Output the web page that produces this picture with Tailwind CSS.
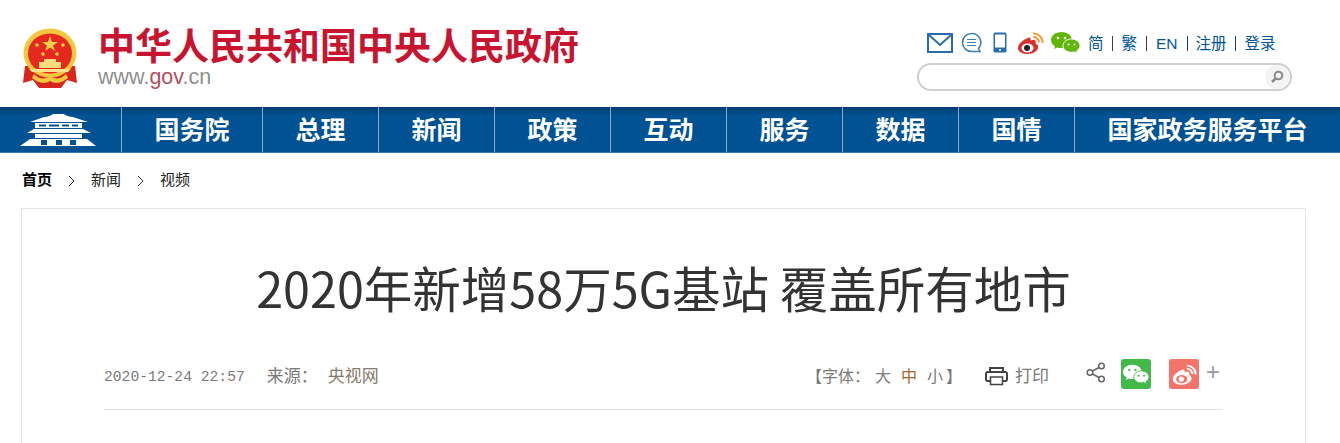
<!DOCTYPE html>
<html lang="zh-CN">
<head>
    <meta charset="UTF-8">
    <meta name="viewport" content="width=device-width, initial-scale=1.0">
    <title>2020年新增58万5G基站 覆盖所有地市</title>
    <script src="https://cdn.jsdelivr.net/npm/@tailwindcss/browser@4"></script>
</head>
<body class="bg-white overflow-hidden font-['Liberation_Sans','Noto_Sans_CJK_SC',sans-serif]">

    <!-- Header -->
    <header class="h-[107px] flex justify-between">
        <div class="flex pl-[22px] pt-[24px]">
            <svg class="w-[56px] h-[62px] mt-[4px]" viewBox="0 0 56 62">
                <path d="M3 38 L1 55 L11 52 L17 60 L39 60 L45 52 L55 55 L53 38 Z" fill="#d8261c"/>
                <ellipse cx="28" cy="25" rx="26.500" ry="24.500" fill="#f5c63f"/>
                <ellipse cx="28" cy="25.500" rx="22" ry="20" fill="#e5291f"/>
                <polygon points="28,8 30,14 36,14 31,17.500 33,23 28,19.500 23,23 25,17.500 20,14 26,14" fill="#f7d14a"/>
                <circle cx="15" cy="17" r="1.800" fill="#f7d14a"/>
                <circle cx="41" cy="17" r="1.800" fill="#f7d14a"/>
                <circle cx="21" cy="26" r="1.800" fill="#f7d14a"/>
                <circle cx="35" cy="26" r="1.800" fill="#f7d14a"/>
                <path d="M22 31 h12 v3 h5 v6 h-22 v-6 h5 Z" fill="#f9dd7c"/>
                <path d="M7 41 h42 l-3 3 h-36 Z" fill="#fbe389"/>
                <path d="M12 46 q8 8 16 2 q8 6 16 -2 l2 4 q-10 8 -18 3 q-8 5 -18 -3 Z" fill="#f5c63f"/>
            </svg>
            <div class="ml-[20px]">
                <div class="text-[37px] leading-[40px] font-bold text-[#c8142f] whitespace-nowrap font-['Noto_Sans_CJK_SC',sans-serif]">中华人民共和国中央人民政府</div>
                <div class="text-[21.500px] leading-[24px] mt-[1px] text-[#8f8f8f]">www.<span class="text-[#b4505f]">gov</span>.cn</div>
            </div>
        </div>

        <div class="w-[423px] pt-[30px]">
            <div class="flex items-center h-[25px] pl-[10px] text-[15.500px] text-[#00549a]">
                <svg class="w-[26px] h-[20px]" viewBox="0 0 26 20" fill="none" stroke="#2a6ca8" stroke-width="2">
                    <rect x="1" y="1" width="24" height="18"/>
                    <path d="M1.500 1.500 L13 12 L24.500 1.500"/>
                </svg>
                <svg class="w-[21px] h-[21px] ml-[8px]" viewBox="0 0 21 21" fill="none" stroke="#3d7fb5" stroke-width="1.500">
                    <path d="M10.500 1.500 a9 9 0 1 0 0 18 h8.500 l-1.500 -3 a9 9 0 0 0 -7 -15 Z"/>
                    <path d="M6 7.500 h9 M6 10.500 h9 M6 13.500 h9" stroke-width="1.200"/>
                </svg>
                <svg class="w-[14px] h-[21px] ml-[11px]" viewBox="0 0 14 21">
                    <rect x="0.500" y="0.500" width="13" height="20" rx="1.500" fill="#2a6ca8"/>
                    <rect x="2" y="2.500" width="10" height="13" fill="#fff"/>
                    <circle cx="7" cy="18" r="1" fill="#fff"/>
                </svg>
                <svg class="w-[27px] h-[22px] ml-[10px]" viewBox="0 0 27 22">
                    <path d="M11 6 C6 8 1 12 1 16 C1 20 6 22 11 22 C17 22 22 18 21 14 C20.500 12.500 19 12 18.500 11.500 C19.500 9 18.500 7.500 15.500 8 L13.500 8.500 C14 6 13 5 11 6 Z" fill="#dc2f2c"/>
                    <ellipse cx="10.500" cy="16" rx="6" ry="4.500" fill="#fff"/>
                    <circle cx="10" cy="16" r="3" fill="#222"/>
                    <path d="M16 1.500 A9 9 0 0 1 25.500 11" fill="none" stroke="#f29a38" stroke-width="2"/>
                    <path d="M16 5 A5.500 5.500 0 0 1 22 10.500" fill="none" stroke="#f29a38" stroke-width="2"/>
                </svg>
                <svg class="w-[29px] h-[22px] ml-[7px]" viewBox="0 0 29 22">
                    <path d="M10.500 0 C4.700 0 0 3.600 0 8 C0 10.600 1.500 12.800 4 14.300 L3 17 L6.300 15.400 C7.600 15.800 9 16 10.500 16 C16.300 16 21 12.400 21 8 C21 3.600 16.300 0 10.500 0 Z" fill="#5eb709"/>
                    <path d="M20.500 7 C15.800 7 12 10 12 13.700 C12 17.400 15.800 20.300 20.500 20.300 C21.500 20.300 22.500 20.200 23.400 19.900 L26.500 21.500 L25.700 18.800 C27.700 17.500 29 15.700 29 13.700 C29 10 25.200 7 20.500 7 Z" fill="#5eb709" stroke="#fff"/>
                    <circle cx="7" cy="6" r="1.300" fill="#fff"/><circle cx="14" cy="6" r="1.300" fill="#fff"/>
                    <circle cx="17.500" cy="12.500" r="1.100" fill="#fff"/><circle cx="23.500" cy="12.500" r="1.100" fill="#fff"/>
                </svg>
                <span class="ml-[8px] pt-[2px]">简</span>
                <span class="w-px h-[15px] bg-[#4a3a3a] ml-[8px] mt-[2px]"></span>
                <span class="ml-[9px] pt-[2px]">繁</span>
                <span class="w-px h-[15px] bg-[#4a3a3a] ml-[9px] mt-[2px]"></span>
                <span class="ml-[9px] pt-[2px]">EN</span>
                <span class="w-px h-[15px] bg-[#1b3d66] ml-[9px] mt-[2px]"></span>
                <span class="ml-[8px] pt-[2px]">注册</span>
                <span class="w-px h-[15px] bg-[#1b3d66] ml-[8px] mt-[2px]"></span>
                <span class="ml-[9px] pt-[2px]">登录</span>
            </div>
            <div class="mt-[8px] w-[375px] h-[28px] border-2 border-[#cfcfcf] rounded-full bg-white flex items-center justify-end pr-[1px]">
                <span class="w-[24px] h-[24px] rounded-full bg-[#f3f3f3] flex items-center justify-center">
                    <svg class="w-[14px] h-[14px]" viewBox="0 0 14 14" fill="none" stroke="#8a8a84" stroke-width="2">
                        <circle cx="8.500" cy="5.500" r="3.800"/>
                        <path d="M5.500 8.500 L2 12" stroke-width="2.500"/>
                    </svg>
                </span>
            </div>
        </div>
    </header>

    <!-- Nav -->
    <nav class="h-[46px] flex bg-gradient-to-b from-[#003d70] via-[#005293] via-[18%] to-[#005293] border-b border-[#3a78ab] text-white text-[25px] leading-[43px] font-bold font-['Noto_Sans_CJK_SC',sans-serif]">
        <div class="w-[122px] border-r border-[#8fa9c4] flex justify-center items-center pr-[6px]">
            <svg class="w-[76px] h-[32px]" viewBox="0 0 76 32" fill="#fff">
                <!-- upper roof -->
                <path d="M24 3 Q30 2.500 33 0 H44 Q47 2.500 53 3 L68 8 H10 Z"/>
                <!-- upper storey with windows -->
                <path d="M15 9 H62 V14 H15 Z"/>
                <path d="M19 10.500 H26 V12.500 H19 Z M29 10.500 H39 V12.500 H29 Z M42 10.500 H49 V12.500 H42 Z M52 10.500 H58 V12.500 H52 Z" fill="#005293"/>
                <!-- middle roof -->
                <path d="M14 15 H63 L71 19 H7 Z"/>
                <!-- lower storey and plinth -->
                <path d="M15 20 H62 V24 H15 Z"/>
                <path d="M10 25 H67 L76 32 H0 Z"/>
                <path d="M21 26 H27 V31 H21 Z M36 26 H42 V31 H36 Z M50 26 H56 V31 H50 Z" fill="#005293"/>
            </svg>
        </div>
        <a class="w-[141px] text-center border-r border-[#8fa9c4]">国务院</a>
        <a class="w-[116px] text-center border-r border-[#8fa9c4]">总理</a>
        <a class="w-[116px] text-center border-r border-[#8fa9c4]">新闻</a>
        <a class="w-[116px] text-center border-r border-[#8fa9c4]">政策</a>
        <a class="w-[116px] text-center border-r border-[#8fa9c4]">互动</a>
        <a class="w-[116px] text-center border-r border-[#8fa9c4]">服务</a>
        <a class="w-[116px] text-center border-r border-[#8fa9c4]">数据</a>
        <a class="w-[116px] text-center border-r border-[#8fa9c4]">国情</a>
        <a class="flex-1 text-center">国家政务服务平台</a>
    </nav>

    <!-- Breadcrumb -->
    <div class="h-[55px] pl-[22px] flex items-center text-[15px] text-[#222]">
        <span class="font-bold text-black">首页</span>
        <svg class="w-[7px] h-[12px] mx-[16px]" viewBox="0 0 7 12" fill="none" stroke="#333"><path d="M1 1 L6 6 L1 11"/></svg>
        <span>新闻</span>
        <svg class="w-[7px] h-[12px] mx-[16px]" viewBox="0 0 7 12" fill="none" stroke="#333"><path d="M1 1 L6 6 L1 11"/></svg>
        <span>视频</span>
    </div>

    <!-- Article -->
    <main class="mx-[21px] w-[1285px] border border-b-0 border-[#e5e5e5] px-[82px] h-[235px]">
        <h1 class="pt-[46px] h-[150px] text-center text-[48.500px] leading-[64px] font-normal text-[#333] font-['Noto_Sans_CJK_SC',sans-serif]">2020年新增58万5G基站 覆盖所有地市</h1>
        <div class="h-[51px] border-b border-[#dfdfdf] flex items-start justify-between text-[16px] leading-[36px] text-[#7a7a7a] [text-spacing-trim:space-all]">
            <div class="flex">
                <span class="font-['Liberation_Mono',monospace] text-[14.670px]">2020-12-24 22:57</span>
                <span class="ml-[22px] text-[17px]">来源：</span>
                <span class="ml-[10px] text-[17px] text-[#8a7a6a]">央视网</span>
            </div>
            <div class="flex items-start mr-[3px]">
                <span>【字体：</span>
                <span class="ml-[5px]">大</span>
                <span class="ml-[10px] text-[#a2692c]">中</span>
                <span class="ml-[10px]">小</span>
                <span class="ml-[3px]">】</span>
                <svg class="w-[23px] h-[20px] ml-[23px] mt-[7px]" viewBox="0 0 23 20" fill="none" stroke="#444" stroke-width="2">
                    <path d="M5 6 V2 H18 V6"/>
                    <path d="M5 15 H2.500 Q1 15 1 13 V8 Q1 6 3 6 H20 Q22 6 22 8 V13 Q22 15 20.500 15 H18"/>
                    <rect x="5.500" y="11" width="12" height="7.500" stroke-width="1.500"/>
                </svg>
                <span class="ml-[7px] text-[17px]">打印</span>
                <svg class="w-[20px] h-[21px] ml-[37px] mt-[3px]" viewBox="0 0 20 21" fill="none" stroke="#666" stroke-width="1.500">
                    <circle cx="15.500" cy="4" r="2.800"/><circle cx="4" cy="10.500" r="2.800"/><circle cx="15.500" cy="17" r="2.800"/>
                    <path d="M6.500 9 L13 5.500 M6.500 12 L13 15.500"/>
                </svg>
                <span class="w-[30px] h-[30px] rounded-[3px] bg-[#43b94a] ml-[15px] flex items-center justify-center">
                    <svg class="w-[26px] h-[21px]" viewBox="0 0 29 22">
                        <path d="M10.500 0 C4.700 0 0 3.600 0 8 C0 10.600 1.500 12.800 4 14.300 L3 17 L6.300 15.400 C7.600 15.800 9 16 10.500 16 C16.300 16 21 12.400 21 8 C21 3.600 16.300 0 10.500 0 Z" fill="#fff"/>
                        <path d="M20.500 7 C15.800 7 12 10 12 13.700 C12 17.400 15.800 20.300 20.500 20.300 C21.500 20.300 22.500 20.200 23.400 19.900 L26.500 21.500 L25.700 18.800 C27.700 17.500 29 15.700 29 13.700 C29 10 25.200 7 20.500 7 Z" fill="#fff" stroke="#43b94a"/>
                        <circle cx="7" cy="6" r="1.300" fill="#43b94a"/><circle cx="14" cy="6" r="1.300" fill="#43b94a"/>
                        <circle cx="17.500" cy="12.500" r="1.100" fill="#43b94a"/><circle cx="23.500" cy="12.500" r="1.100" fill="#43b94a"/>
                    </svg>
                </span>
                <span class="w-[30px] h-[30px] rounded-[3px] bg-[#f5746a] ml-[18px] flex items-center justify-center">
                    <svg class="w-[25px] h-[21px]" viewBox="0 0 27 22">
                        <path d="M11 6 C6 8 1 12 1 16 C1 20 6 22 11 22 C17 22 22 18 21 14 C20.500 12.500 19 12 18.500 11.500 C19.500 9 18.500 7.500 15.500 8 L13.500 8.500 C14 6 13 5 11 6 Z" fill="#fff"/>
                        <ellipse cx="10.500" cy="16" rx="6" ry="4.500" fill="#f5746a"/>
                        <circle cx="10" cy="16" r="2.800" fill="#fff"/>
                        <path d="M16 1.500 A9 9 0 0 1 25.500 11" fill="none" stroke="#fff" stroke-width="2"/>
                        <path d="M16 5 A5.500 5.500 0 0 1 22 10.500" fill="none" stroke="#fff" stroke-width="2"/>
                    </svg>
                </span>
                <span class="ml-[7px] w-[14px] text-[24px] leading-[26px] text-[#999] font-light">+</span>
            </div>
        </div>
    </main>
</body>
</html>
